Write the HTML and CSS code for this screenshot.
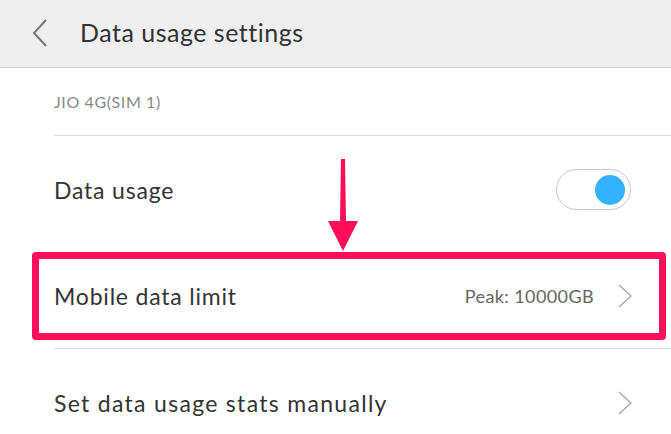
FILE: index.html
```html
<!DOCTYPE html>
<html>
<head>
<meta charset="utf-8">
<link rel="stylesheet" href="styles.css">
</head>
<body>
<div class="screen">
  <header class="topbar">
    <svg class="back" width="16" height="28" viewBox="0 0 16 28"><path d="M14 1 L2 14 L14 27" fill="none" stroke="#777" stroke-width="2"/></svg>
    <h1 class="title">Data usage settings</h1>
  </header>
  <div class="list">
    <div class="row sim"><span class="sim-label">JIO 4G(SIM 1)</span></div>
    <div class="row usage">
      <span class="label">Data usage</span>
      <span class="toggle"><span class="knob"></span></span>
    </div>
    <div class="row limit">
      <span class="label">Mobile data limit</span>
      <span class="value">Peak: 10000GB</span>
      <svg class="chev" width="14" height="24" viewBox="0 0 14 24"><path d="M1 1 L13 12 L1 23" fill="none" stroke="#aaa" stroke-width="1.5"/></svg>
    </div>
    <div class="row manual">
      <span class="label label-wide">Set data usage stats manually</span>
      <svg class="chev" width="14" height="24" viewBox="0 0 14 24"><path d="M1 1 L13 12 L1 23" fill="none" stroke="#aaa" stroke-width="1.5"/></svg>
    </div>
  </div>
  <div class="highlight"></div>
  <svg class="arrow" width="32" height="94" viewBox="0 0 32 94">
    <polygon points="14,0 18,0 19,62 31,62 16,92 1,62 13,62" fill="#ff0f57"/>
  </svg>
</div>
</body>
</html>
```

FILE: styles.css
```css
* { box-sizing: border-box; margin: 0; padding: 0; }
html, body { width: 671px; height: 434px; overflow: hidden; background: #fff; }
body { font-family: "Lato", "Open Sans", sans-serif; color: #333; }
.screen { position: relative; width: 671px; height: 434px; overflow: hidden; }
.topbar {
  height: 68px;
  background: #efefef;
  border-bottom: 1px solid #cfcfcf;
  display: flex;
  align-items: center;
  padding-left: 32px;
}
.back { flex: none; margin-right: 32px; margin-top: -2px; }
.title { font-size: 25px; font-weight: 400; color: #333; letter-spacing: 0.5px; margin-top: -4px; }
.list { padding-left: 54px; }
.row {
  display: flex;
  align-items: center;
  padding-right: 39px;
}
.sim { height: 68px; border-bottom: 1px solid #dcdcdc; }
.sim-label { font-size: 16px; color: #888; letter-spacing: 0.6px; }
.usage { height: 107px; padding-right: 40px; }
.limit { height: 106px; border-bottom: 1px solid #dcdcdc; }
.manual { height: 85px; padding-top: 23px; }
.label { font-size: 23px; color: #333; flex: 1; letter-spacing: 0.8px; }
.label-wide { letter-spacing: 1.3px; }
.value { font-size: 18px; color: #666; margin-right: 24px; letter-spacing: 0.4px; }
.chev { flex: none; }
.toggle {
  width: 75px; height: 41px;
  border: 1px solid #c8c8c8;
  border-radius: 21px;
  display: flex; align-items: center; justify-content: flex-end;
  padding-right: 5px;
}
.knob { width: 30px; height: 30px; border-radius: 50%; background: #33b2fb; }
.highlight {
  position: absolute;
  left: 32px; top: 252px;
  width: 634px; height: 88px;
  border: 7px solid #ff0f57;
  border-radius: 4px;
}
.arrow { position: absolute; left: 327px; top: 159px; }
```
